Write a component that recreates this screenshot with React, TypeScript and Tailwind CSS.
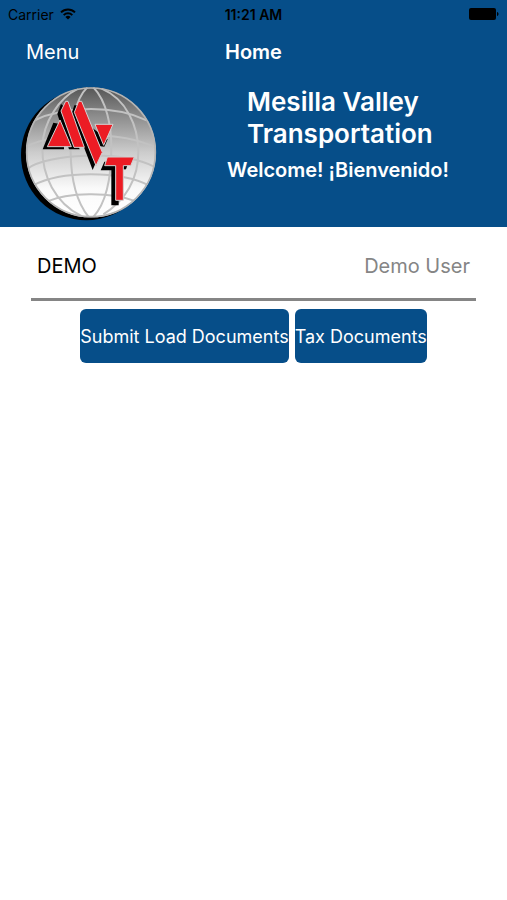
import type { ReactNode } from "react";

function WifiIcon() {
  return (
    <svg width="16" height="12" viewBox="0 0 16 12" fill="none" stroke="currentColor" strokeWidth="2" aria-hidden="true">
      <path d="M1 4.4a10 10 0 0 1 14 0" />
      <path d="M3.7 7.1a6.2 6.2 0 0 1 8.6 0" />
      <path d="M8 11.6 5.4 8.9a3.8 3.8 0 0 1 5.2 0z" fill="currentColor" stroke="none" />
    </svg>
  );
}

function BatteryIcon() {
  return (
    <svg width="30" height="12" viewBox="0 0 30 12" fill="currentColor" aria-hidden="true">
      <rect width="27" height="12" rx="2" />
      <path d="M28 4c2 .6 2 3.4 0 4z" />
    </svg>
  );
}

function GlobeLogo() {
  return (
    <svg className="w-[137px] h-[135px] shrink-0" viewBox="30 30 411 405" role="img" aria-label="MVT">
      <defs>
        <linearGradient id="globe" x1="0" y1="0" x2="0" y2="1">
          <stop offset="0" stopColor="#565656" />
          <stop offset="0.22" stopColor="#8c8c8c" />
          <stop offset="0.5" stopColor="#cccccc" />
          <stop offset="0.78" stopColor="#fafafa" />
          <stop offset="1" stopColor="#ffffff" />
        </linearGradient>
        <clipPath id="globe-edge">
          <circle cx="243" cy="229" r="195" />
        </clipPath>
      </defs>
      <circle cx="229" cy="237" r="196" fill="#000" />
      <circle cx="243" cy="229" r="195" fill="url(#globe)" />
      <g fill="none" stroke="#c2c2c2" strokeWidth="6" clipPath="url(#globe-edge)">
        <path d="M76 132C150 95 300 82 410 133" />
        <path d="M48 212C130 172 320 160 438 215" />
        <path d="M54 277C110 235 330 220 432 272" />
        <path d="M70 328C150 285 330 282 420 330" />
        <path d="M112 376C170 350 300 345 378 376" />
        <path d="M204 38C150 65 99 135 97 214C96 300 135 380 214 420" />
        <path d="M232 34C195 70 180 150 182 228C183 320 205 385 236 423" />
        <path d="M250 34C290 75 304 150 304 214C304 310 285 385 250 423" />
        <path d="M275 38C350 70 384 150 385 225C386 310 345 375 280 415" />
      </g>
      <circle cx="243" cy="229" r="193" fill="none" stroke="#b5b5b5" strokeWidth="5" />
      <g fill="#000">
        <path d="M130 140 98 220H162V208H116L146 143z" />
        <path d="M153 84 142 114 177 220H209L160 90z" />
        <path d="M193 88 184 115 248 282 264 245 204 88z" />
        <path d="M243 153 271 211 283 212 293 190z" />
        <path d="M283 257 272 283H304V388H326V281L348 280 356 257z" />
      </g>
      <g fill="#ec1c24" stroke="#d2d2d2" strokeWidth="3">
        <path d="M150 132 112 212H184z" />
        <path d="M167 76 153 105 192 214H223L174 76z" />
        <path d="M206 76 193 109 258 269 277 229 215 76z" />
        <path d="M255 145H309L281 208z" />
        <path d="M292 243H373L362 269H340V373H317V269H284z" />
      </g>
    </svg>
  );
}

function ActionButton({ children }: { children: ReactNode }) {
  return (
    <button type="button" className="h-[54px] rounded-md bg-[#064e89] text-white text-[18px] whitespace-nowrap">
      {children}
    </button>
  );
}

export default function App() {
  return (
    <div className="min-h-screen bg-white font-[Inter,'Liberation_Sans',sans-serif]">
      <header className="bg-[#064e89] text-white pb-1.5">
        <div className="grid grid-cols-3 items-center h-7 px-2 text-black text-[14px]">
          <div className="flex items-center gap-1.5">
            <span>Carrier</span>
            <WifiIcon />
          </div>
          <span className="text-center font-semibold">11:21 AM</span>
          <div className="flex justify-end">
            <BatteryIcon />
          </div>
        </div>
        <nav className="grid grid-cols-3 items-center h-12 px-[26px] text-[20px]">
          <button type="button" className="justify-self-start">Menu</button>
          <h1 className="text-center font-semibold">Home</h1>
        </nav>
        <div className="flex pl-5 pt-2.5">
          <GlobeLogo />
          <div className="ml-[70px]">
            <h2 className="pl-5 text-[26px] leading-8 font-semibold">
              Mesilla Valley
              <br />
              Transportation
            </h2>
            <p className="mt-1.5 text-[20px] leading-7 font-semibold">Welcome! ¡Bienvenido!</p>
          </div>
        </div>
      </header>
      <main className="px-[31px]">
        <div className="flex items-center justify-between h-[74px] pt-1.5 px-1.5 border-b-3 border-[#858585] text-[20px]">
          <span className="text-black">DEMO</span>
          <span className="text-[#858585]">Demo User</span>
        </div>
        <div className="flex justify-center gap-1.5 pt-2">
          <ActionButton>Submit Load Documents</ActionButton>
          <ActionButton>Tax Documents</ActionButton>
        </div>
      </main>
    </div>
  );
}
